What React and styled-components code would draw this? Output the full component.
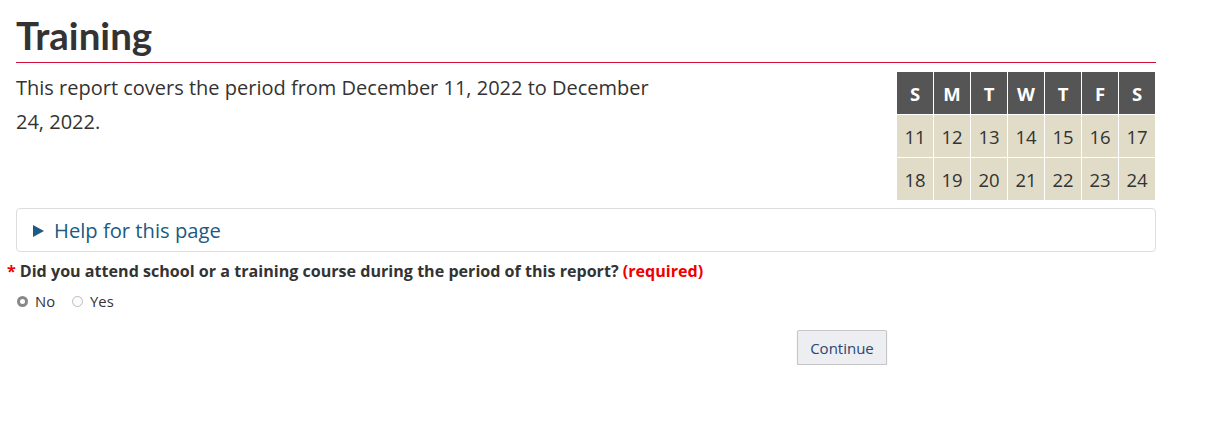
import React from 'react';
import styled, { createGlobalStyle } from 'styled-components';

const GlobalStyle = createGlobalStyle`
  body {
    margin: 0;
    background: #fff;
    font-family: "Open Sans", "Liberation Sans", sans-serif;
    color: #333;
  }
`;

const Page = styled.div`
  width: 1140px;
  padding: 0 16px;
`;

const Title = styled.h1`
  font-family: Lato, "Liberation Sans", sans-serif;
  font-weight: 700;
  font-size: 38.5px;
  line-height: 44px;
  margin: 13px 0 0;
  padding-bottom: 5px;
  border-bottom: 1px solid #d0103a;
  color: #333;
`;

const Intro = styled.div`
  display: flex;
  justify-content: space-between;
  margin-top: 8px;
`;

const Period = styled.p`
  width: 665px;
  margin: 0;
  font-size: 20px;
  line-height: 34px;
`;

const Calendar = styled.div`
  display: grid;
  grid-template-columns: repeat(7, 36px);
  grid-auto-rows: 42px;
  gap: 1px;
  margin: 1px 1px 0 0;
`;

const DayCell = styled.div`
  display: flex;
  align-items: center;
  justify-content: center;
  font-size: 18.5px;
  font-weight: ${({ $head }) => ($head ? 700 : 400)};
  background: ${({ $head }) => ($head ? '#555' : '#e0dcc8')};
  color: ${({ $head }) => ($head ? '#fff' : '#333')};
`;

const Help = styled.div`
  display: flex;
  align-items: center;
  gap: 10px;
  height: 42px;
  margin-top: 8px;
  padding-left: 16px;
  border: 1px solid #ddd;
  border-radius: 4px;
  color: #205a82;
  font-size: 20.2px;
`;

const Arrow = styled.span`
  width: 0;
  height: 0;
  border-top: 6px solid transparent;
  border-bottom: 6px solid transparent;
  border-left: 11px solid #205a82;
  margin-top: 1px;
`;

const Question = styled.div`
  margin: 9px 0 0 -9px;
  font-size: 16.1px;
  font-weight: 700;
  line-height: 20px;
  color: #333;
`;

const Star = styled.span`
  color: #e00;
  margin-right: 4px;
`;

const Required = styled.span`
  color: #e00;
`;

const Options = styled.div`
  display: flex;
  gap: 16px;
  margin-top: 10px;
  font-size: 14.8px;
`;

const Option = styled.label`
  display: flex;
  align-items: center;
  gap: 7px;
`;

const Radio = styled.span`
  box-sizing: border-box;
  width: 11px;
  height: 11px;
  border-radius: 50%;
  margin-left: 1px;
  border: ${({ $on }) => ($on ? '3px solid #888' : '1px solid #bbb')};
  background: ${({ $on }) => ($on ? '#fff' : '#fcfcfc')};
`;

const Actions = styled.div`
  display: flex;
  padding-left: 781px;
  margin-top: 19px;
`;

const Button = styled.button`
  width: 90px;
  height: 35px;
  background: #eceef1;
  border: 1px solid #c6c6c6;
  border-radius: 2px;
  box-shadow: 0 1px 1px rgba(0, 0, 0, 0.25);
  color: #2a4670;
  font-family: "Open Sans", "Liberation Sans", sans-serif;
  font-size: 15px;
`;

const heads = ['S', 'M', 'T', 'W', 'T', 'F', 'S'];
const days = [11, 12, 13, 14, 15, 16, 17, 18, 19, 20, 21, 22, 23, 24];

export default function App() {
  return (
    <Page>
      <GlobalStyle />
      <Title>Training</Title>
      <Intro>
        <Period>This report covers the period from December 11, 2022 to December 24, 2022.</Period>
        <Calendar>
          {heads.map((h, i) => (
            <DayCell key={'h' + i} $head>{h}</DayCell>
          ))}
          {days.map((d) => (
            <DayCell key={d}>{d}</DayCell>
          ))}
        </Calendar>
      </Intro>
      <Help>
        <Arrow />
        Help for this page
      </Help>
      <Question>
        <Star>*</Star>
        Did you attend school or a training course during the period of this report?{' '}
        <Required>(required)</Required>
      </Question>
      <Options>
        <Option>
          <Radio $on />
          No
        </Option>
        <Option>
          <Radio />
          Yes
        </Option>
      </Options>
      <Actions>
        <Button>Continue</Button>
      </Actions>
    </Page>
  );
}
